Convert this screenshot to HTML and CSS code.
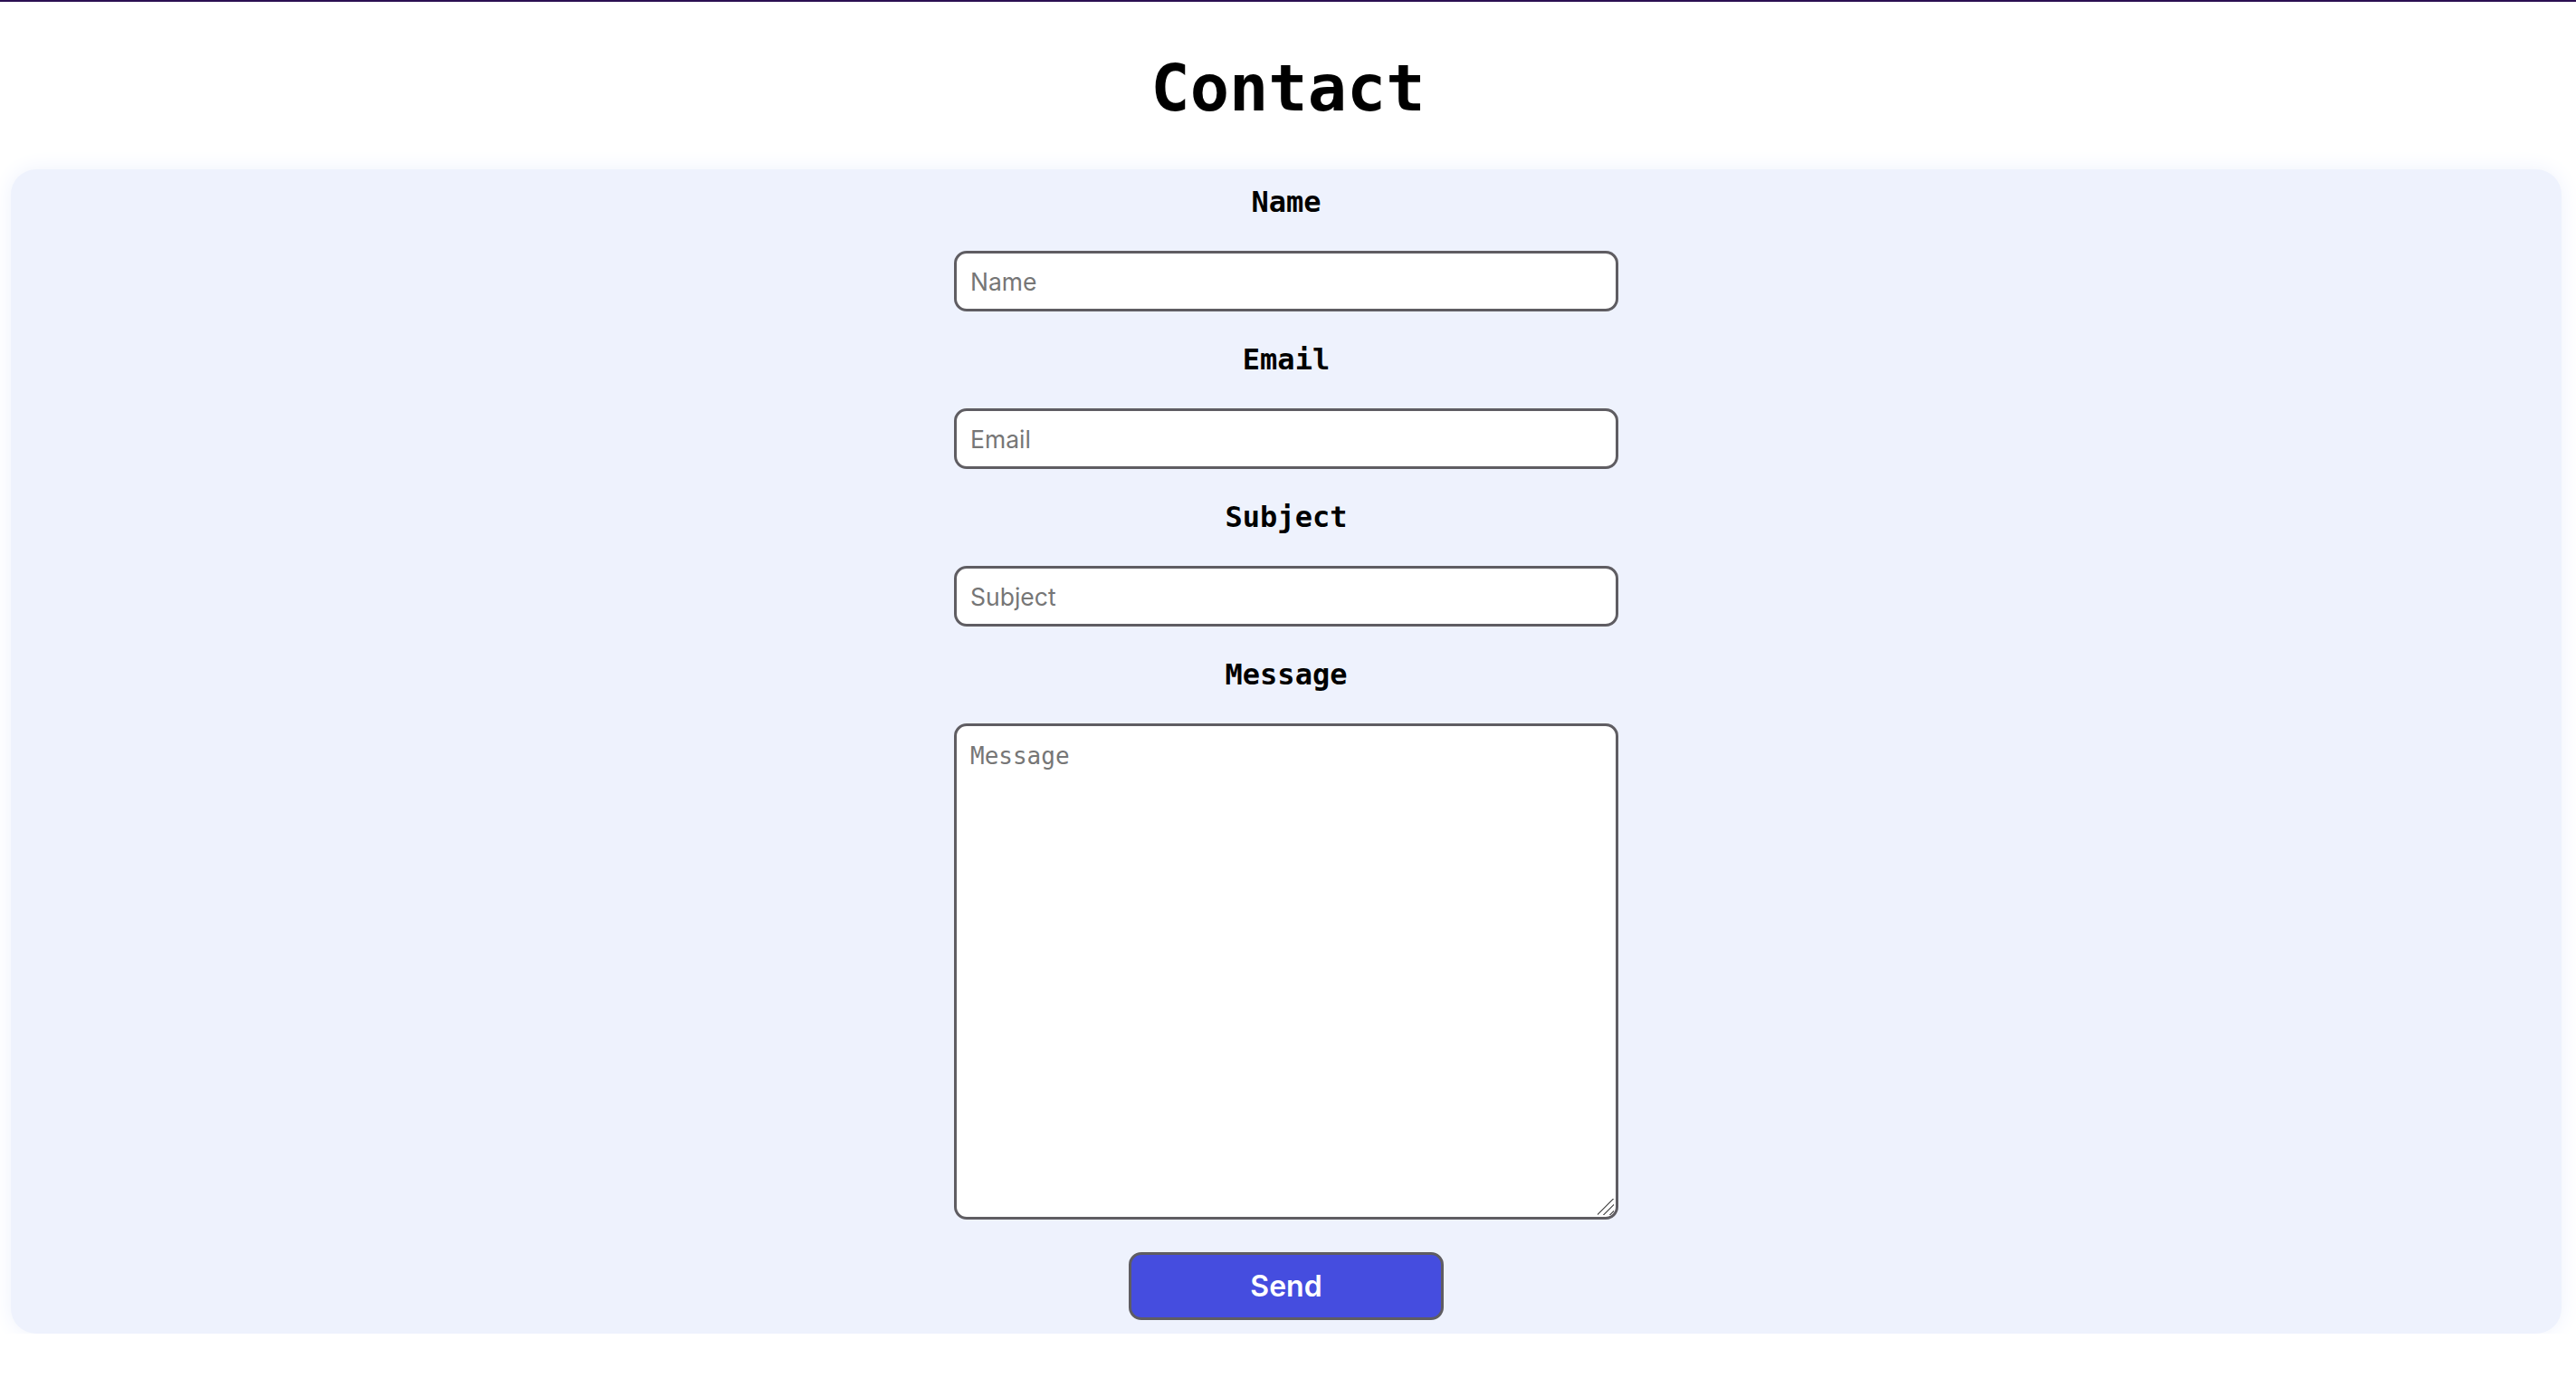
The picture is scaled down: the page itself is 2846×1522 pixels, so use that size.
FILE: index.html
```html
<!DOCTYPE html>
<html lang="en">
<head>
<meta charset="utf-8">
<title>Contact</title>
<link rel="stylesheet" href="styles.css">
</head>
<body>
  <h1 class="title">Contact</h1>
  <section class="card">
    <form class="contact-form">
      <label class="field-label" for="name">Name</label>
      <input class="field" id="name" type="text" placeholder="Name">
      <label class="field-label" for="email">Email</label>
      <input class="field" id="email" type="email" placeholder="Email">
      <label class="field-label" for="subject">Subject</label>
      <input class="field" id="subject" type="text" placeholder="Subject">
      <label class="field-label" for="message">Message</label>
      <textarea class="field field-area" id="message" placeholder="Message"></textarea>
      <button class="send" type="button">Send</button>
    </form>
  </section>
</body>
</html>
```

FILE: styles.css
```css
html, body {
  background: #ffffff;
}

body {
  margin: 0;
  border-top: 2px solid #2b0f52;
  font-family: "DejaVu Sans Mono", "Liberation Mono", monospace;
  color: #000;
}

.title {
  margin: 53px 0 48px;
  text-align: center;
  font-family: "DejaVu Sans Mono", monospace;
  font-weight: bold;
  font-size: 72px;
  line-height: 84px;
}

.card {
  margin: 0 16px 0 12px;
  padding: 18px 0 15px;
  background: #eef2fd;
  border-radius: 28px;
  box-shadow: 0 0 24px 0 #eef2fd;
  display: flex;
  justify-content: center;
}

.contact-form {
  width: 734px;
  display: grid;
  grid-template-columns: 1fr;
  row-gap: 35px;
}

.field-label {
  display: block;
  text-align: center;
  font-family: "DejaVu Sans Mono", monospace;
  font-weight: bold;
  font-size: 32px;
  line-height: 37px;
}

.field {
  box-sizing: border-box;
  width: 100%;
  height: 67px;
  margin: 0;
  padding: 0 15px;
  border: 3px solid #5f5d62;
  border-radius: 14px;
  background-color: #ffffff;
  font-family: Inter, "Noto Sans", sans-serif;
  font-size: 26.5px;
  color: #000;
  outline: none;
}

.field::placeholder {
  color: #767676;
}

.field-area {
  height: 548px;
  padding: 18px 15px;
  font-family: "DejaVu Sans Mono", monospace;
  font-size: 26px;
  line-height: 30px;
  resize: none;
  background-image: linear-gradient(135deg,
    transparent 0 46%, #6f6f6f 46% 52%,
    transparent 52% 66%, #6f6f6f 66% 72%,
    transparent 72% 84%, #6f6f6f 84% 90%,
    transparent 90%);
  background-repeat: no-repeat;
  background-size: 18px 18px;
  background-position: right 2px bottom 2px;
}

.send {
  justify-self: center;
  box-sizing: border-box;
  width: 348px;
  height: 75px;
  margin-top: 1px;
  border: 3px solid #5f5d62;
  border-radius: 14px;
  background: #454ddf;
  color: #ffffff;
  font-family: Inter, "Noto Sans", sans-serif;
  font-weight: 600;
  font-size: 32px;
  cursor: pointer;
}
```
